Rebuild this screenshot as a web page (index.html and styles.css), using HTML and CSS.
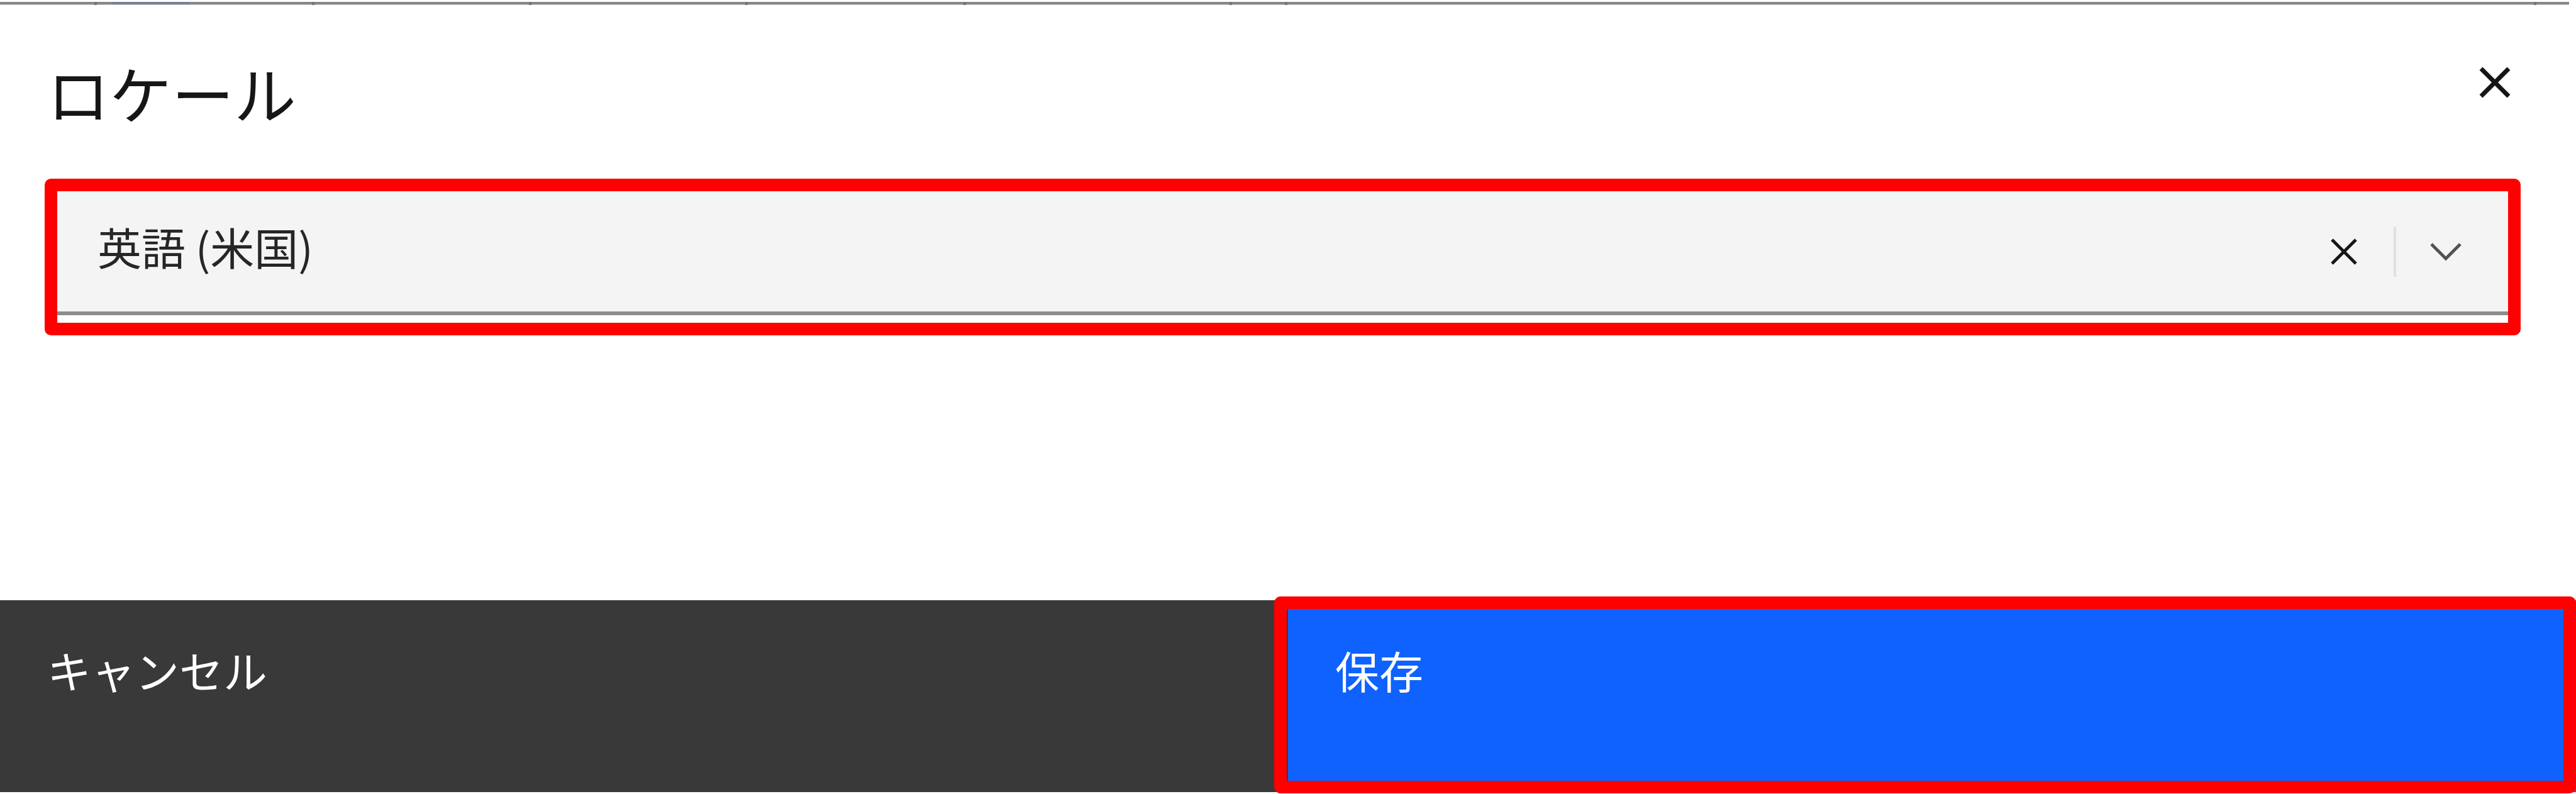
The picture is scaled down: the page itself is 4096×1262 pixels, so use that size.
FILE: index.html
```html
<!DOCTYPE html>
<html lang="ja">
<head>
<meta charset="utf-8">
<title>ロケール</title>
<link rel="stylesheet" href="styles.css">
</head>
<body>
<div class="page-edge" aria-hidden="true">
  <span></span><span class="selected"></span><span></span><span></span><span></span><span></span><span></span><span></span><span></span>
</div>
<main class="dialog" role="dialog" aria-labelledby="title">
  <header class="dialog-header">
    <h1 id="title"><label for="locale">ロケール</label></h1>
    <button class="icon-button" type="button" aria-label="閉じる">
      <svg class="close-icon" viewBox="0 0 50 50"><path d="M3 3L47 47M47 3L3 47" stroke-width="7"/></svg>
    </button>
  </header>
  <div class="field-highlight">
    <div class="combo">
      <input id="locale" type="text" value="英語 (米国)">
      <button class="icon-button" type="button" aria-label="選択をクリア">
        <svg class="clear-icon" viewBox="0 0 42 42"><path d="M2 2L40 40M40 2L2 40" stroke-width="5"/></svg>
      </button>
      <span class="divider"></span>
      <button class="icon-button" type="button" aria-label="メニューを開く">
        <svg class="chevron-icon" viewBox="0 0 50 30"><path d="M2 3L25 26L48 3" stroke-width="5"/></svg>
      </button>
    </div>
  </div>
  <footer class="actions">
    <button class="action cancel" type="button">キャンセル</button>
    <button class="action save" type="button">保存</button>
  </footer>
</main>
</body>
</html>
```
FILE: styles.css
```css
* {
  box-sizing: border-box;
}

body {
  margin: 0;
  min-height: 100vh;
  display: flex;
  flex-direction: column;
  background: #fff;
  color: #161616;
  font-family: "Noto Sans CJK JP", sans-serif;
}

.page-edge {
  display: grid;
  grid-template-columns: 154fr 346fr 345fr 344fr 347fr 423fr 88fr 1986fr 52fr;
  height: 5px;
  margin: 3px 11px 0 0;
  background: linear-gradient(#888 80%, #ccc 80%);
}

.page-edge span {
  border-right: 4px solid #777;
}

.page-edge span:last-child {
  border-right: 0;
}

.page-edge .selected {
  background: linear-gradient(#75809a, #75809a) 24px 0 / 124px 4px no-repeat;
}

.dialog {
  flex: 1;
  display: flex;
  flex-direction: column;
}

.dialog-header {
  display: flex;
  justify-content: space-between;
  align-items: flex-start;
  padding: 68px 80px 0 75px;
}

h1 {
  margin: 0;
  font-size: 99px;
  line-height: 140px;
  font-weight: 400;
}

button {
  border: 0;
  padding: 0;
  font-family: inherit;
}

.icon-button {
  display: flex;
  align-items: center;
  justify-content: center;
  background: none;
}

.dialog-header .icon-button {
  width: 98px;
  height: 110px;
}

svg {
  fill: none;
  stroke: #161616;
}

.close-icon {
  width: 50px;
  height: 50px;
}

.clear-icon {
  width: 42px;
  height: 42px;
}

.chevron-icon {
  width: 50px;
  height: 30px;
  stroke: #525252;
}

.field-highlight {
  margin: 68px 88px 0 71px;
  padding-bottom: 12px;
  border: 20px solid #f00;
  border-radius: 10px;
}

.combo {
  display: flex;
  align-items: center;
  height: 197px;
  padding-right: 20px;
  background: #f4f4f4;
  border-bottom: 6px solid #8d8d8d;
}

.combo input {
  flex: 1;
  min-width: 0;
  height: 100%;
  border: 0;
  padding: 0 0 16px 64px;
  background: none;
  color: #262626;
  font-family: inherit;
  font-size: 70px;
}

.combo .icon-button {
  width: 158px;
  height: 80px;
}

.divider {
  width: 4px;
  height: 80px;
  background: #e0e0e0;
}

.actions {
  display: grid;
  grid-template-columns: 1fr 1fr;
  margin: auto 0 3px;
}

.action {
  height: 305px;
  padding: 61px 75px 0;
  display: flex;
  align-items: flex-start;
  color: #fff;
  font-size: 70px;
  line-height: 100px;
}

.cancel {
  background: #393939;
}

.save {
  position: relative;
  background: #0f62fe;
}

.save::after {
  content: "";
  position: absolute;
  inset: -6px 0 -2px -22px;
  border: 20px solid #f00;
  border-radius: 10px;
}
```
